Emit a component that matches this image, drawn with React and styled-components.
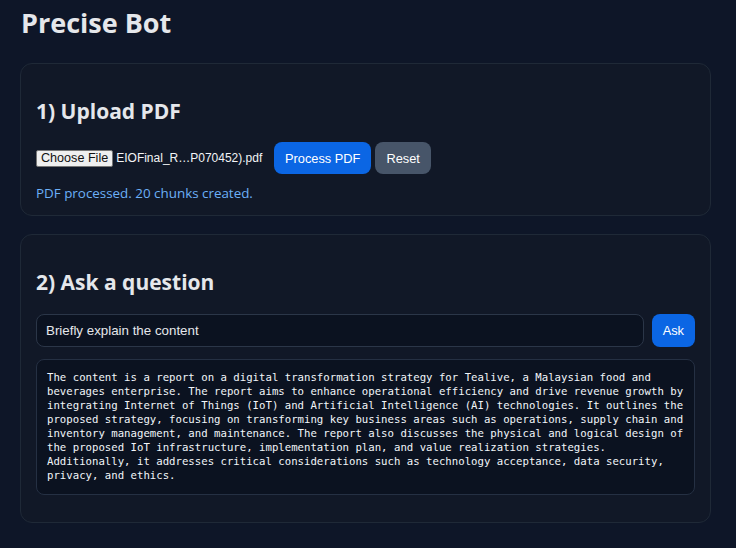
import React, {useState} from 'react';
import styled, {createGlobalStyle} from 'styled-components';

const GlobalStyle = createGlobalStyle`
  html, body {
    margin: 0;
    padding: 0;
    background: #0e1628;
  }
  body {
    font-family: "Open Sans", "Noto Sans", sans-serif;
    color: #e5e7eb;
  }
`;

const Page = styled.div`
  padding: 3px 25px 20px 20px;
`;

const Title = styled.h1`
  margin: 0 0 20px;
  padding-left: 1px;
  font-size: 27px;
  line-height: 40px;
  font-weight: 700;
  color: #e5e7eb;
`;

const Card = styled.section`
  background: #111827;
  border: 1px solid #1f2937;
  border-radius: 12px;
  padding: 15px 15px 12px;
  margin-bottom: 18px;
`;

const Heading = styled.h2`
  margin: 17px 0 ${p => p.$after || 16}px;
  font-size: 21px;
  line-height: 30px;
  font-weight: 700;
  color: #e5e7eb;
`;

const Row = styled.div`
  display: flex;
  align-items: center;
  gap: 8px;
`;

const FileField = styled.label`
  display: flex;
  flex: none;
  align-items: center;
  gap: 3px;
  width: 230px;
  font-family: "Liberation Sans", Arial, sans-serif;
  font-size: 12px;
  color: #f3f4f6;
  white-space: nowrap;
`;

const ChooseButton = styled.span`
  display: inline-block;
  padding: 0 4px;
  height: 17px;
  line-height: 15px;
  box-sizing: border-box;
  background: #efefef;
  color: #111;
  border: 1px solid #767676;
  border-radius: 2px;
  font-size: 12.6px;
`;

const Buttons = styled.div`
  display: flex;
  gap: 4px;
`;

const Button = styled.button`
  height: ${p => p.$h || 32}px;
  padding: 0 ${p => p.$px || 11}px;
  border: none;
  border-radius: 8px;
  background: ${p => (p.$variant === 'muted' ? '#475569' : '#0b66e4')};
  color: #ffffff;
  font-family: "Liberation Sans", Arial, sans-serif;
  font-size: 12.8px;
  cursor: pointer;
`;

const Status = styled.p`
  margin: 10px 0 0;
  font-size: 13.4px;
  line-height: 19px;
  color: #6cb0f8;
`;

const QuestionInput = styled.input`
  flex: 1;
  height: 33px;
  box-sizing: border-box;
  padding: 0 9px;
  background: #0b1220;
  border: 1px solid #2b3648;
  border-radius: 8px;
  color: #e5e7eb;
  font-family: "Liberation Sans", Arial, sans-serif;
  font-size: 13.33px;
  outline: none;
`;

const Answer = styled.pre`
  margin: 12px 0 15px;
  padding: 11px 10px 11px;
  background: #0b1220;
  border: 1px solid #253043;
  border-radius: 8px;
  font-family: "DejaVu Sans Mono", monospace;
  font-size: 10.68px;
  line-height: 14px;
  color: #f1f5f9;
  white-space: pre;
  overflow: hidden;
`;

const answerLines = [
  'The content is a report on a digital transformation strategy for Tealive, a Malaysian food and',
  'beverages enterprise. The report aims to enhance operational efficiency and drive revenue growth by',
  'integrating Internet of Things (IoT) and Artificial Intelligence (AI) technologies. It outlines the',
  'proposed strategy, focusing on transforming key business areas such as operations, supply chain and',
  'inventory management, and maintenance. The report also discusses the physical and logical design of',
  'the proposed IoT infrastructure, implementation plan, and value realization strategies.',
  'Additionally, it addresses critical considerations such as technology acceptance, data security,',
  'privacy, and ethics.',
];

export default function App() {
  const [question, setQuestion] = useState('Briefly explain the content');

  return (
    <Page>
      <GlobalStyle />
      <Title>Precise Bot</Title>

      <Card>
        <Heading>1) Upload PDF</Heading>
        <Row>
          <FileField>
            <ChooseButton>Choose File</ChooseButton>
            <span>EIOFinal_R…P070452).pdf</span>
          </FileField>
          <Buttons>
            <Button>Process PDF</Button>
            <Button $variant="muted">Reset</Button>
          </Buttons>
        </Row>
        <Status>PDF processed. 20 chunks created.</Status>
      </Card>

      <Card>
        <Heading $after={17}>2) Ask a question</Heading>
        <Row>
          <QuestionInput value={question} onChange={e => setQuestion(e.target.value)} />
          <Button $h={33} $px={11}>Ask</Button>
        </Row>
        <Answer>{answerLines.join('\n')}</Answer>
      </Card>
    </Page>
  );
}
